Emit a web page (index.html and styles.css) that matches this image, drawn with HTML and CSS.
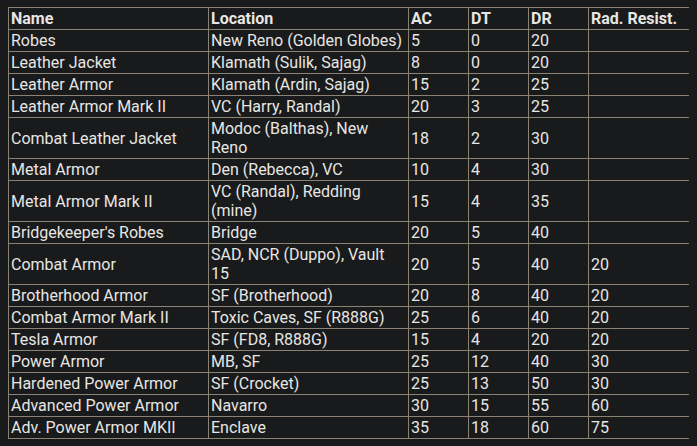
FILE: index.html
```html
<!DOCTYPE html>
<html>
<head>
<meta charset="utf-8">
<link rel="stylesheet" href="styles.css">
</head>
<body>
<table class="armor">
<colgroup>
<col class="c-name"><col class="c-loc"><col class="c-num"><col class="c-num"><col class="c-num"><col class="c-rad">
</colgroup>
<thead>
<tr><th>Name</th><th>Location</th><th>AC</th><th>DT</th><th>DR</th><th>Rad. Resist.</th></tr>
</thead>
<tbody>
<tr><td>Robes</td><td>New Reno (Golden Globes)</td><td>5</td><td>0</td><td>20</td><td></td></tr>
<tr><td>Leather Jacket</td><td>Klamath (Sulik, Sajag)</td><td>8</td><td>0</td><td>20</td><td></td></tr>
<tr><td>Leather Armor</td><td>Klamath (Ardin, Sajag)</td><td>15</td><td>2</td><td>25</td><td></td></tr>
<tr><td>Leather Armor Mark II</td><td>VC (Harry, Randal)</td><td>20</td><td>3</td><td>25</td><td></td></tr>
<tr><td>Combat Leather Jacket</td><td>Modoc (Balthas), New Reno</td><td>18</td><td>2</td><td>30</td><td></td></tr>
<tr><td>Metal Armor</td><td>Den (Rebecca), VC</td><td>10</td><td>4</td><td>30</td><td></td></tr>
<tr><td>Metal Armor Mark II</td><td>VC (Randal), Redding (mine)</td><td>15</td><td>4</td><td>35</td><td></td></tr>
<tr><td>Bridgekeeper's Robes</td><td>Bridge</td><td>20</td><td>5</td><td>40</td><td></td></tr>
<tr><td>Combat Armor</td><td>SAD, NCR (Duppo), Vault 15</td><td>20</td><td>5</td><td>40</td><td>20</td></tr>
<tr><td>Brotherhood Armor</td><td>SF (Brotherhood)</td><td>20</td><td>8</td><td>40</td><td>20</td></tr>
<tr><td>Combat Armor Mark II</td><td>Toxic Caves, SF (R888G)</td><td>25</td><td>6</td><td>40</td><td>20</td></tr>
<tr><td>Tesla Armor</td><td>SF (FD8, R888G)</td><td>15</td><td>4</td><td>20</td><td>20</td></tr>
<tr><td>Power Armor</td><td>MB, SF</td><td>25</td><td>12</td><td>40</td><td>30</td></tr>
<tr><td>Hardened Power Armor</td><td>SF (Crocket)</td><td>25</td><td>13</td><td>50</td><td>30</td></tr>
<tr><td>Advanced Power Armor</td><td>Navarro</td><td>30</td><td>15</td><td>55</td><td>60</td></tr>
<tr><td>Adv. Power Armor MKII</td><td>Enclave</td><td>35</td><td>18</td><td>60</td><td>75</td></tr>
</tbody>
</table>
</body>
</html>
```
FILE: styles.css
```css
html, body {
  background: #181a1b;
}
body {
  margin: 7px 8px;
  color: #e8e6e3;
  font-family: Roboto, "Liberation Sans", sans-serif;
  font-size: 16px;
  line-height: 19px;
}
.armor {
  border-collapse: collapse;
  table-layout: fixed;
  width: 681px;
}
.c-name, .c-loc { width: 200px; }
.c-num { width: 60px; }
.c-rad { width: 101px; }
.armor th, .armor td {
  border: 1px solid #8c8273;
  padding: 1px 2px;
  text-align: left;
  vertical-align: middle;
}
.armor th {
  font-weight: bold;
}
```
